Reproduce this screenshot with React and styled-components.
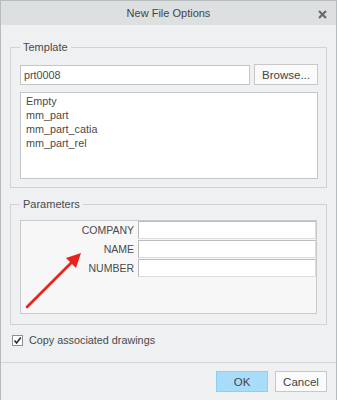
import React from "react";
import styled, { createGlobalStyle } from "styled-components";

const GlobalStyle = createGlobalStyle`
  html, body {
    margin: 0;
    padding: 0;
    background: #eef0f1;
  }
  * {
    box-sizing: border-box;
  }
`;

const Window = styled.div`
  width: 337px;
  height: 400px;
  border: 1px solid #b7bbbe;
  border-bottom: none;
  background: #eef0f1;
  font-family: "Liberation Sans", Arial, sans-serif;
  font-size: 10.8px;
  color: #4a4a4a;
  display: flex;
  flex-direction: column;
`;

const TitleBar = styled.div`
  height: 24px;
  background: #dde0e1;
  display: flex;
  align-items: center;
  justify-content: center;
  position: relative;
  font-size: 11px;
  color: #444;
`;

const CloseButton = styled.div`
  position: absolute;
  right: 9px;
  top: 9px;
  width: 9px;
  height: 9px;
  display: flex;
`;

const Body = styled.div`
  padding: 22px 9px 15px 9px;
  display: flex;
  flex-direction: column;
`;

const Group = styled.div`
  position: relative;
  border: 1px solid #cfd3d6;
  padding: ${(p) => p.$pad};
  margin-bottom: ${(p) => p.$mb || 0}px;
`;

const Legend = styled.span`
  position: absolute;
  top: -8px;
  left: 9px;
  padding: 0 3px;
  background: #eef0f1;
  line-height: 14px;
  font-size: 11px;
  color: #4a4a4a;
`;

const Row = styled.div`
  display: flex;
  gap: 4px;
  align-items: center;
`;

const TextInput = styled.div`
  flex: 1;
  height: 20px;
  background: #fff;
  border: 1px solid #c3c6c8;
  padding: 0 3px;
  display: flex;
  align-items: center;
`;

const Button = styled.div`
  width: ${(p) => p.$w}px;
  height: 21px;
  display: flex;
  align-items: center;
  justify-content: center;
  background: ${(p) => (p.$primary ? "#a8ddfa" : "#fafafa")};
  border: 1px solid ${(p) => (p.$primary ? "#8ccff1" : "#c6c8ca")};
  color: #444;
  font-size: 11.5px;
`;

const ListBox = styled.div`
  margin-top: 7px;
  height: 87px;
  background: #fff;
  border: 1px solid #c3c6c8;
  padding: 1px 5px;
`;

const ListItem = styled.div`
  line-height: 14px;
`;

const ParamBox = styled.div`
  position: relative;
  height: 94px;
  background: #f7f7f7;
  border: 1px solid #c8cbcd;
  display: grid;
  grid-template-columns: 1fr 178px;
  grid-auto-rows: 18px;
  row-gap: 1px;
  align-content: start;
`;

const ParamLabel = styled.div`
  text-align: right;
  padding-right: 4px;
  line-height: 18px;
  font-size: 10.5px;
`;

const ParamInput = styled.div`
  background: #fff;
  border-top: 1px solid #b9bcbe;
  border-left: 1px solid #b9bcbe;
  border-right: 1px solid #dcdcdc;
  border-bottom: 1px solid #dcdcdc;
`;

const Arrow = styled.svg`
  position: absolute;
  left: 0;
  top: 0;
  pointer-events: none;
`;

const CheckRow = styled.label`
  margin-top: 8px;
  display: flex;
  align-items: center;
  gap: 6px;
  padding-left: 2px;
  line-height: 14px;
`;

const CheckBox = styled.span`
  width: 11px;
  height: 11px;
  border: 1px solid #8e9193;
  background: #fff;
  display: flex;
  align-items: center;
  justify-content: center;
`;

const Footer = styled.div`
  border-top: 1px solid #d3d6d8;
  padding: 8px 9px 0 0;
  display: flex;
  justify-content: flex-end;
  gap: 7px;
`;

const templates = ["Empty", "mm_part", "mm_part_catia", "mm_part_rel"];
const params = ["COMPANY", "NAME", "NUMBER"];

export default function App() {
  return (
    <>
      <GlobalStyle />
      <Window>
        <TitleBar>
          New File Options
          <CloseButton>
            <svg width="9" height="9" viewBox="0 0 9 9">
              <path d="M1 1 L8 8 M8 1 L1 8" stroke="#6a6a6a" strokeWidth="2.2" />
            </svg>
          </CloseButton>
        </TitleBar>
        <Body>
          <Group $pad="16px 8px 8px 9px" $mb={16}>
            <Legend>Template</Legend>
            <Row>
              <TextInput>prt0008</TextInput>
              <Button $w={64}>Browse...</Button>
            </Row>
            <ListBox>
              {templates.map((t) => (
                <ListItem key={t}>{t}</ListItem>
              ))}
            </ListBox>
          </Group>
          <Group $pad="15px 9px 10px 9px">
            <Legend>Parameters</Legend>
            <ParamBox>
              {params.map((p) => (
                <React.Fragment key={p}>
                  <ParamLabel>{p}</ParamLabel>
                  <ParamInput />
                </React.Fragment>
              ))}
              <Arrow width="100" height="92" viewBox="0 0 100 92">
                <line x1="6" y1="86" x2="52" y2="40" stroke="#e8231b" strokeWidth="2.6" strokeLinecap="round" />
                <polygon points="60,32 55,47 45,37" fill="#e8231b" />
              </Arrow>
            </ParamBox>
          </Group>
          <CheckRow>
            <CheckBox>
              <svg width="9" height="9" viewBox="0 0 9 9">
                <path d="M1.5 4.5 L3.6 7 L7.8 1.5" stroke="#2b2b2b" strokeWidth="1.6" fill="none" />
              </svg>
            </CheckBox>
            Copy associated drawings
          </CheckRow>
        </Body>
        <Footer>
          <Button $w={52} $primary>OK</Button>
          <Button $w={52}>Cancel</Button>
        </Footer>
      </Window>
    </>
  );
}
